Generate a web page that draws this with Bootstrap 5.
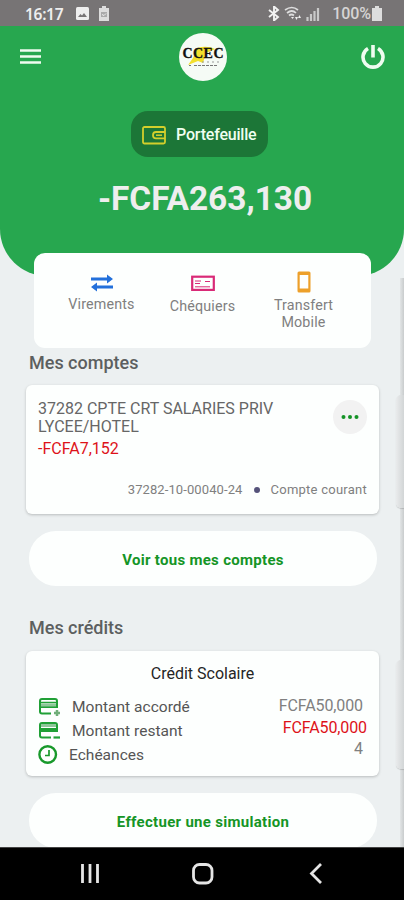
<!DOCTYPE html>
<html lang="fr">
<head>
<meta charset="utf-8">
<meta name="viewport" content="width=device-width, initial-scale=1">
<title>Portefeuille</title>
<link href="https://cdn.jsdelivr.net/npm/bootstrap@5.3.0/dist/css/bootstrap.min.css" rel="stylesheet">
<style>
body{font-family:Roboto,"Liberation Sans",sans-serif;background:#ecf0f1;color:#666;overflow:hidden}
svg{display:block;flex:none}
.phone{width:404px;height:900px}
.status{height:26px;background:#777475;color:#eee;padding:1px 21px 0 25px}
.clock{font:600 15.5px/24px "Noto Sans",sans-serif;width:51px;letter-spacing:-.3px}
.pct{font-size:16px;font-weight:500;line-height:24px;color:#d6d4d4;letter-spacing:-.1px}
.hero{height:250px;background:#27a74f;border-radius:0 0 47px 47px}
.topbar{padding:6px 19px 0 20px;height:56px}
.logo{width:48px;height:48px;background:#f5fbf5;margin-left:3px}
.wallet{width:137px;height:46px;margin:29px 0 0 131px;background:#1c7637;border-radius:17px;color:#effff0;font-weight:500;font-size:16px;letter-spacing:-.2px;padding:2px 0 0 11px}
.wallet-label{margin-left:10px}
.total{font-size:33.4px;line-height:42px;font-weight:700;color:#eee;margin-top:21px;padding-left:6px}
.content-area{height:821px;position:relative}
.quick{width:337px;height:95px;margin:-23px 0 0 34px;border-radius:11px;background:#fdfffe;color:#808080;font-size:14.3px;line-height:17px;letter-spacing:.15px;padding-top:17px}
.quick .cell{width:101px}
.phone-icon{margin-top:1px}
.two-line{margin-top:4px}
.ttl{font-size:18px;font-weight:500;line-height:22px;color:#5c5f60;margin:4px 0 0 29px}
.ttl.later{margin-top:31px}
.box{width:353px;margin-left:26px;border-radius:6px;background:#fdfffe;box-shadow:0 1px 3px rgba(0,0,0,.22)}
.pill{width:348px;height:55px;margin:17px 0 0 29px;padding-top:3px;border-radius:27px;background:#fdfffe;color:#159526;font-weight:700;font-size:15px;letter-spacing:.3px}
.acc{height:129px;padding:15px 12px 0;margin-top:11px}
.acc-name{font-size:16px;line-height:18px;color:#666}
.acc-name .red{margin-top:4px}
.red{color:#dd1219}
.dots{width:34px;height:34px;background:#f2f2f2}
.meta{font-size:13px;line-height:16px;color:#808080;letter-spacing:.1px;margin-top:24px}
.meta-type{letter-spacing:.25px}
.bullet{width:6px;height:6px;background:#55527a;margin:0 11px}
.credit{height:125px;padding:13px 12px 0;margin-top:12px}
.credit-name{font-size:16px;line-height:20px;color:#252525}
.credit-rows{margin-top:11px}
.lbl{font-size:15.5px;line-height:24px;color:#555;letter-spacing:.02px}
.lbl .d-flex{gap:11px}
.amt{font-size:16px;line-height:21.5px;color:#808080;letter-spacing:-.1px}
.amt .gray{padding-right:4px}
.edge{position:absolute;right:0;top:252px;bottom:0;width:4px;background:linear-gradient(90deg,#e2e5e6,#c9cccd)}
.peek{position:absolute;right:0;width:8px;border-radius:5px 0 0 5px;background:linear-gradient(90deg,#e9ebec,#d2d5d6);box-shadow:0 1px 1px rgba(0,0,0,.15)}
.peek-a{top:369px;height:113px}.peek-b{top:634px;height:109px}
.sysnav{height:53px;background:#000;border-top:1px solid #444}
</style>
<script src="https://cdn.jsdelivr.net/npm/bootstrap@5.3.0/dist/js/bootstrap.bundle.min.js"></script>
</head>
<body>
<div class="phone d-flex flex-column overflow-hidden">
 <div class="status d-flex align-items-center">
  <span class="clock">16:17</span>
  <svg width="13" height="13" viewBox="0 0 13 13"><rect width="13" height="13" rx="1.500" fill="#eee"/><path d="M2 10l2.500-3 1.500 1.500L8 6l3 4z" fill="#777475"/></svg>
  <svg class="ms-2" width="14" height="15" viewBox="0 0 14 15"><path d="M5 0h4v2h3v13H2V2h3z" fill="#ddd"/><path d="M4 6h6v5H4z" fill="#aaa"/><path d="M5 8.500l2 1 2-2" stroke="#eee" fill="none"/></svg>
  <div class="d-flex align-items-center ms-auto">
   <svg width="12" height="15" viewBox="0 0 12 15"><path d="M1 4l9 7-4 3.500V.5L10 4l-9 7" fill="none" stroke="#f2f2f2" stroke-width="1.900"/></svg>
   <svg class="ms-1" width="18" height="15" viewBox="0 0 18 15"><path d="M1 4q7-5 13 0M3 7q5-4 9 0M5 9.500q2.500-2 5 0" fill="none" stroke="#ddd" stroke-width="1.700"/><path d="M7 11h3l-1.500 2zM11 11h3l-1.500 3zM14 12l1.500-3 1.500 3z" fill="#eee"/></svg>
   <svg class="ms-1" width="14" height="14" viewBox="0 0 14 14"><path d="M1.500 10v4M5 7v7M8.500 4v10M12 1v13" stroke="#c9c9c9" stroke-width="2.200"/></svg>
   <span class="pct ms-2 ps-1">100%</span>
   <svg width="12" height="15" viewBox="0 0 12 15"><path d="M4 0h4v2h3v13H1V2h3z" fill="#ddd"/></svg>
  </div>
 </div>
 <div class="content-area overflow-hidden">
  <div class="edge"></div><div class="peek peek-a"></div><div class="peek peek-b"></div>
  <header class="hero">
   <div class="topbar d-flex justify-content-between align-items-center">
    <svg width="21" height="16" viewBox="0 0 21 16"><path d="M0 1.500h21M0 7.500h21M0 13.500h21" stroke="#effcf0" stroke-width="2.700"/></svg>
    <div class="logo rounded-circle">
     <svg width="48" height="48" viewBox="0 0 48 48"><path d="M18 15q10-3 18 1l-9 4-3 10-5-2-10 4 5-7z" fill="#f2df2c"/><text x="3.500" y="25" font-family="Liberation Serif,serif" font-weight="700" font-size="14" textLength="41" lengthAdjust="spacing" fill="#111" stroke="#111" stroke-width=".3">CCEC</text><path d="M23 29h19" stroke="#999" stroke-dasharray="2 3"/><path d="M10 32.500h2M15 32.500h24" stroke="#777" stroke-dasharray="3 1"/></svg>
    </div>
    <svg width="24" height="24" viewBox="0 0 24 24"><path d="M7 3.500a10 10 0 1 0 10 0M12 0v12.500" fill="none" stroke="#effcf0" stroke-width="3.600"/></svg>
   </div>
   <div class="wallet d-flex align-items-center">
    <svg width="24" height="19" viewBox="0 0 24 19"><rect x="1" y="1" width="22" height="16.500" rx="1.500" fill="none" stroke="#d3cf2c" stroke-width="1.800"/><path d="M23 6H14q-3 0-3 3.200t3 3.200h9" fill="none" stroke="#d3cf2c" stroke-width="1.800"/><path d="M14 9.200h6" stroke="#d3cf2c" stroke-width="1.500"/></svg>
    <span class="wallet-label">Portefeuille</span>
   </div>
   <div class="total text-center">-FCFA263,130</div>
  </header>
  <section class="quick d-flex justify-content-center text-center position-relative">
   <div class="cell d-flex flex-column align-items-center pt-1">
    <svg width="24" height="18" viewBox="0 0 24 18"><path d="M1 5h19M4 13h19" stroke="#2370db" stroke-width="3"/><path d="M17 .5l6 4.500-6 4.500zM7 8.500L1 13l6 4.500z" fill="#2370db"/></svg><span class="mt-1">Virements</span>
   </div>
   <div class="cell d-flex flex-column align-items-center pt-1">
    <svg width="24" height="20" viewBox="0 0 24 20"><rect x="1.200" y="2.700" width="21.600" height="13.200" fill="none" stroke="#d92a77" stroke-width="2.200"/><path d="M4 7h6M4 9.500h5M14 7.500h5M4 12.800h15" stroke="#d92a77" stroke-width="1"/></svg><span class="mt-1">Chéquiers</span>
   </div>
   <div class="cell d-flex flex-column align-items-center">
    <svg class="phone-icon" width="14" height="22" viewBox="0 0 14 22"><rect x=".5" y=".5" width="13" height="21" rx="1.500" fill="#eda02a"/><path d="M2.700 4h8.600v13.500H2.700z" fill="#fdfffe"/></svg><span class="two-line">Transfert<br>Mobile</span>
   </div>
  </section>
  <h2 class="ttl">Mes comptes</h2>
  <section class="box acc">
   <div class="d-flex justify-content-between align-items-start">
    <div class="acc-name">37282 CPTE CRT SALARIES PRIV<br>LYCEE/HOTEL<div class="red">-FCFA7,152</div></div>
    <div class="dots rounded-circle d-flex align-items-center justify-content-center"><svg width="18" height="4" viewBox="0 0 18 4"><g fill="#149326"><circle cx="2.500" cy="2" r="2"/><circle cx="9" cy="2" r="2"/><circle cx="15.500" cy="2" r="2"/></g></svg></div>
   </div>
   <div class="meta d-flex justify-content-end align-items-center"><span>37282-10-00040-24</span><span class="bullet rounded-circle"></span><span class="meta-type">Compte courant</span></div>
  </section>
  <div class="pill d-flex align-items-center justify-content-center">Voir tous mes comptes</div>
  <h2 class="ttl later">Mes crédits</h2>
  <section class="box credit">
   <div class="credit-name text-center">Crédit Scolaire</div>
   <div class="credit-rows d-flex justify-content-between">
    <div class="lbl">
     <div class="d-flex align-items-center"><svg width="23" height="20" viewBox="0 0 23 20"><path d="M13 16.500H4q-2 0-2-2V4q0-2 2-2h13q2 0 2 2v6H2" fill="none" stroke="#20a036" stroke-width="2"/><path d="M2 5.500h17" stroke="#20a036" stroke-width="1.500"/><path d="M3 8h15" stroke="#8fc79a" stroke-width="3"/><path d="M19 13v6M16 16h6" stroke="#70ae79" stroke-width="2.500"/></svg><span>Montant accordé</span></div>
     <div class="d-flex align-items-center"><svg width="23" height="20" viewBox="0 0 23 20"><path d="M13 16.500H4q-2 0-2-2V4q0-2 2-2h13q2 0 2 2v6H2" fill="none" stroke="#20a036" stroke-width="2"/><path d="M3 4.500h15" stroke="#8fc79a" stroke-width="3"/><path d="M2 8h17" stroke="#20a036" stroke-width="2"/><path d="M15.500 16.500H22" stroke="#20a036" stroke-width="2.200"/></svg><span>Montant restant</span></div>
     <div class="d-flex align-items-center"><svg width="20" height="20" viewBox="0 0 20 20"><circle cx="9.700" cy="9.500" r="8.300" fill="none" stroke="#18992b" stroke-width="2.400"/><path d="M11 5v5.500H7" fill="none" stroke="#18992b" stroke-width="1.700"/></svg><span>Echéances</span></div>
    </div>
    <div class="amt text-end"><div class="gray">FCFA50,000</div><div class="red">FCFA50,000</div><div class="gray">4</div></div>
   </div>
  </section>
  <div class="pill d-flex align-items-center justify-content-center">Effectuer une simulation</div>
 </div>
 <nav class="sysnav d-flex">
  <svg width="404" height="52" viewBox="0 0 404 52"><g fill="none" stroke="#e5e5e5" stroke-width="2.800"><path d="M82.500 16v19M90 16v19M97.500 16v19"/><rect x="193.500" y="16.500" width="18.500" height="18.500" rx="6"/><path d="M321 16l-9.500 9.500L321 35"/></g></svg>
 </nav>
</div>
</body>
</html>
